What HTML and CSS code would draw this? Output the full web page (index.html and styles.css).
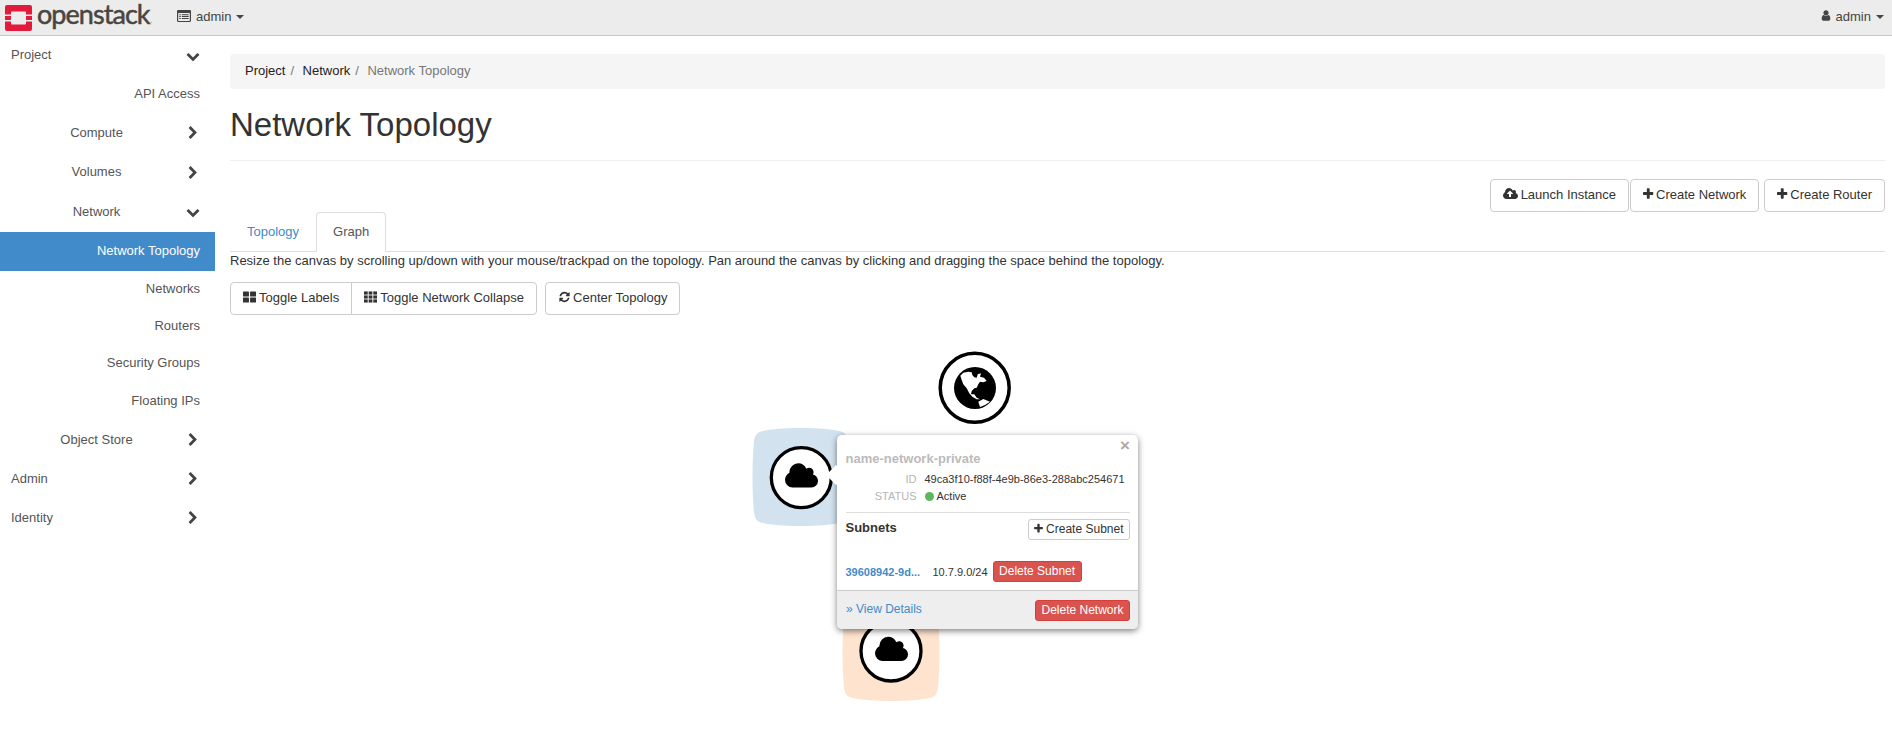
FILE: index.html
```html
<!DOCTYPE html>
<html>
<head>
<title>Network Topology</title>
<meta charset="UTF-8">
<link rel="stylesheet" href="styles.css">
</head>
<body>
<svg class="defs" width="0" height="0">
  <symbol id="i-cloud" viewBox="0 0 1920 1792"><path d="M1920 1152q0 159-112.5 271.5t-271.5 112.5h-1088q-185 0-316.5-131.5t-131.5-316.5q0-130 70-240t188-165q-2-30-2-43 0-212 150-362t362-150q156 0 285.5 87t188.5 231q71-62 166-62 106 0 181 75t75 181q0 76-41 138 130 31 213.5 135.5t83.5 238.5z"/></symbol>
  <symbol id="i-upload" viewBox="0 0 1920 1792"><path d="M1280 864q0-14-9-23l-352-352q-9-9-23-9t-23 9l-351 351q-10 12-10 24 0 14 9 23t23 9h224v352q0 13 9.5 22.5t22.5 9.5h192q13 0 22.5-9.500t9.500-22.500v-352h224q13 0 22.5-9.500t9.500-22.500zm640 288q0 159-112.5 271.5t-271.5 112.5h-1088q-185 0-316.5-131.5t-131.5-316.5q0-130 70-240t188-165q-2-30-2-43 0-212 150-362t362-150q156 0 285.5 87t188.5 231q71-62 166-62 106 0 181 75t75 181q0 76-41 138 130 31 213.5 135.5t83.5 238.5z"/></symbol>
  <symbol id="i-plus" viewBox="192 0 1408 1792"><path d="M1600 736v192q0 40-28 68t-68 28h-416v416q0 40-28 68t-68 28h-192q-40 0-68-28t-28-68v-416h-416q-40 0-68-28t-28-68v-192q0-40 28-68t68-28h416v-416q0-40 28-68t68-28h192q40 0 68 28t28 68v416h416q40 0 68 28t28 68z"/></symbol>
  <symbol id="i-user" viewBox="0 0 1792 1792"><path d="M1536 1399q0 109-62.5 187t-150.5 78h-854q-88 0-150.5-78t-62.5-187q0-85 8.5-160.5t31.5-152 58.5-131 94-89 134.5-34.5q131 128 313 128t313-128q76 0 134.5 34.5t94 89 58.5 131 31.5 152 8.5 160.5zm-256-887q0 159-112.5 271.5t-271.5 112.5-271.5-112.5-112.5-271.5 112.5-271.5 271.5-112.5 271.5 112.5 112.5 271.5z"/></symbol>
  <symbol id="i-down" viewBox="0 0 1792 1792"><path d="M1683 808l-742 741q-19 19-45 19t-45-19l-742-741q-19-19-19-45.5t19-45.5l166-165q19-19 45-19t45 19l531 531 531-531q19-19 45-19t45 19l166 165q19 19 19 45.5t-19 45.5z"/></symbol>
  <symbol id="i-right" viewBox="0 0 1792 1792"><path d="M1363 877l-742 742q-19 19-45 19t-45-19l-166-166q-19-19-19-45t19-45l531-531-531-531q-19-19-19-45t19-45l166-166q19-19 45-19t45 19l742 742q19 19 19 45t-19 45z"/></symbol>
  <symbol id="i-refresh" viewBox="0 0 1792 1792"><path d="M1639 1056q0 5-1 7-64 268-268 434.5t-478 166.5q-146 0-282.5-55t-243.5-157l-129 129q-19 19-45 19t-45-19-19-45v-448q0-26 19-45t45-19h448q26 0 45 19t19 45-19 45l-137 137q71 66 161 102t187 36q134 0 250-65t186-179q11-17 53-117 8-23 30-23h192q13 0 22.5 9.5t9.5 22.5zm25-800v448q0 26-19 45t-45 19h-448q-26 0-45-19t-19-45 19-45l138-138q-148-137-349-137-134 0-250 65t-186 179q-11 17-53 117-8 23-30 23h-199q-13 0-22.5-9.5t-9.5-22.5v-7q65-268 270-434.5t480-166.5q146 0 284 55.5t245 156.5l130-129q19-19 45-19t45 19 19 45z"/></symbol>
  <symbol id="i-large" viewBox="0 0 14 12"><rect x="0" y="0" width="6.4" height="5.4" rx=".6"/><rect x="7.6" y="0" width="6.4" height="5.4" rx=".6"/><rect x="0" y="6.6" width="6.4" height="5.4" rx=".6"/><rect x="7.6" y="6.6" width="6.4" height="5.4" rx=".6"/></symbol>
  <symbol id="i-th" viewBox="0 0 14 12"><rect x="0" y="0" width="4" height="3.4"/><rect x="5" y="0" width="4" height="3.4"/><rect x="10" y="0" width="4" height="3.4"/><rect x="0" y="4.3" width="4" height="3.4"/><rect x="5" y="4.3" width="4" height="3.4"/><rect x="10" y="4.3" width="4" height="3.4"/><rect x="0" y="8.6" width="4" height="3.4"/><rect x="5" y="8.6" width="4" height="3.4"/><rect x="10" y="8.6" width="4" height="3.4"/></symbol>
  <symbol id="i-list" viewBox="0 0 14 12"><path fill-rule="evenodd" d="M1.2 0h11.600c.7 0 1.200.5 1.200 1.200v9.600c0 .7-.5 1.200-1.200 1.200H1.200C.5 12 0 11.500 0 10.800V1.200C0 .5.500 0 1.200 0zM1.200 3v7.600c0 .2.100.3.300.3h11c.2 0 .3-.1.300-.3V3zM2.300 4.200v1h1.500v-1zm2.500 0v1h6.900v-1zM2.300 6.100v1h1.500v-1zm2.500 0v1h6.900v-1zM2.300 8v1h1.500V8zm2.500 0v1h6.900V8z"/></symbol>
  <symbol id="n-back" overflow="visible"><path d="M0-49C16-49 30-48 38-46C44-45 46-42 47-36C49-15 49 15 47 36C46 42 44 45 38 46C30 48 16 49 0 49C-16 49-30 48-38 46C-44 45-46 42-47 36C-49 15-49-15-47-36C-46-42-44-45-38-46C-30-48-16-49 0-49Z"/></symbol>
</svg>

<header class="navbar">
  <div class="brand">
    <svg class="logo" viewBox="0 0 27 26">
      <path fill="#e21a3c" fill-rule="evenodd" d="M2 0h23a2 2 0 0 1 2 2v7.500h-6V7.500a1 1 0 0 0-1-1H7a1 1 0 0 0-1 1v2H0V2a2 2 0 0 1 2-2zM0 16.500h6v2a1 1 0 0 0 1 1h13a1 1 0 0 0 1-1v-2h6V24a2 2 0 0 1-2 2H2a2 2 0 0 1-2-2zM0 11h6v4H0zM21 11h6v4h-6z"/>
    </svg>
    <span class="wordmark">openstack</span><span class="tm">.</span>
  </div>
  <a class="nav-menu"><svg class="ic ic-list"><use href="#i-list"/></svg>admin<i class="caret"></i></a>
  <a class="nav-menu nav-user"><svg class="ic ic-user"><use href="#i-user"/></svg>admin<i class="caret"></i></a>
</header>

<div class="page">
  <nav class="sidebar">
    <a class="side-row top"><span>Project</span><svg class="chev"><use href="#i-down"/></svg></a>
    <a class="side-sub first">API Access</a>
    <a class="side-row mid"><span>Compute</span><svg class="chev"><use href="#i-right"/></svg></a>
    <a class="side-row mid"><span>Volumes</span><svg class="chev"><use href="#i-right"/></svg></a>
    <a class="side-row mid"><span>Network</span><svg class="chev"><use href="#i-down"/></svg></a>
    <a class="side-sub active">Network Topology</a>
    <a class="side-sub">Networks</a>
    <a class="side-sub">Routers</a>
    <a class="side-sub">Security Groups</a>
    <a class="side-sub">Floating IPs</a>
    <a class="side-row mid"><span>Object Store</span><svg class="chev"><use href="#i-right"/></svg></a>
    <a class="side-row top"><span>Admin</span><svg class="chev"><use href="#i-right"/></svg></a>
    <a class="side-row top"><span>Identity</span><svg class="chev"><use href="#i-right"/></svg></a>
  </nav>

  <main class="content">
    <ol class="breadcrumb">
      <li>Project</li><li class="sep">/</li>
      <li>Network</li><li class="sep">/</li>
      <li class="current">Network Topology</li>
    </ol>
    <h1 class="page-title">Network Topology</h1>

    <div class="actions">
      <a class="btn"><svg class="ic ic-cloud"><use href="#i-upload"/></svg>Launch Instance</a>
      <a class="btn"><svg class="ic ic-add"><use href="#i-plus"/></svg>Create Network</a>
      <a class="btn gap"><svg class="ic ic-add"><use href="#i-plus"/></svg>Create Router</a>
    </div>

    <ul class="tabs">
      <li class="tab">Topology</li>
      <li class="tab selected">Graph</li>
    </ul>
    <p class="help">Resize the canvas by scrolling up/down with your mouse/trackpad on the topology. Pan around the canvas by clicking and dragging the space behind the topology.</p>

    <div class="toolbar">
      <div class="btn-group">
        <a class="btn"><svg class="ic ic-grid"><use href="#i-large"/></svg>Toggle Labels</a>
        <a class="btn"><svg class="ic ic-grid"><use href="#i-th"/></svg>Toggle Network Collapse</a>
      </div>
      <a class="btn"><svg class="ic ic-grid ic-sync"><use href="#i-refresh"/></svg>Center Topology</a>
    </div>
  </main>
</div>

<!-- graph canvas, nodes sit where the force layout left them -->
<svg class="graph" width="1892" height="736" viewBox="0 0 1892 736">
  <use href="#n-back" x="801" y="477" fill="#d2e2ef"/>
  <use href="#n-back" x="891" y="652" fill="#fee3ce"/>

  <circle cx="974.700" cy="387.800" r="34.500" fill="#fff" stroke="#000" stroke-width="3.500"/>
  <circle cx="975" cy="388" r="21" fill="#000"/>
  <path fill="#fff" d="M960.300 375.700L963.300 372.700L968.300 371.700L971.700 372.300L972.300 375L974.300 377.300L976.700 377.700L977.700 374.300L981 373.300L980 376.700L984 377.700L986.700 381L983.300 382.300L980 381.700L978.300 384.300L976.700 387.700L974.300 388.300L971.700 391L971 394.300L974.300 394.300L976.700 397.700L980 399.300L976.700 399.300L972.300 396.700L969.300 393.300L966.700 388.300L963.300 384.300L961.700 380Z"/>
  <path fill="#fff" d="M978.300 401.700L983.300 399L990 401.700L985 405L980 407Z"/>

  <circle cx="801.300" cy="477.600" r="30" fill="#fff" stroke="#000" stroke-width="3.300"/>
  <use href="#i-cloud" x="785" y="461" width="33" height="31" fill="#000"/>
  <circle cx="891" cy="651" r="30" fill="#fff" stroke="#000" stroke-width="3.300"/>
  <use href="#i-cloud" x="875" y="634.500" width="33" height="31" fill="#000"/>
</svg>

<section class="balloon">
  <i class="balloon-arrow"></i>
  <span class="close">&times;</span>
  <div class="balloon-body">
    <h4 class="balloon-name">name-network-private</h4>
    <dl class="facts">
      <dt>ID</dt><dd>49ca3f10-f88f-4e9b-86e3-288abc254671</dd>
      <dt>STATUS</dt><dd><i class="dot"></i>Active</dd>
    </dl>
    <div class="subnet-head">
      <strong>Subnets</strong>
      <a class="btn btn-xs"><svg class="ic ic-add"><use href="#i-plus"/></svg>Create Subnet</a>
    </div>
    <div class="subnet-row">
      <a class="subnet-id">39608942-9d...</a>
      <span class="cidr">10.7.9.0/24</span>
      <a class="btn btn-xs danger">Delete Subnet</a>
    </div>
  </div>
  <div class="balloon-foot">
    <a class="details">» View Details</a>
    <a class="btn btn-xs danger">Delete Network</a>
  </div>
</section>
</body>
</html>
```

FILE: styles.css
```css
* {
  box-sizing: border-box;
}

html, body {
  margin: 0;
  height: 736px;
  overflow: hidden;
}

body {
  position: relative;
  background: #fff;
  color: #333;
  font: 13px/18.57px "Liberation Sans", Arial, sans-serif;
}

.defs {
  position: absolute;
}

.ic {
  display: inline-block;
  fill: currentColor;
  vertical-align: -1px;
}

.ic-add {
  width: 10.500px;
  height: 14px;
  margin-right: 2.500px;
  vertical-align: -2px;
}

.ic-grid {
  width: 13px;
  height: 12px;
  margin-right: 3px;
}

.ic-sync {
  margin-right: 2px;
}

.ic-cloud {
  width: 15px;
  height: 14px;
  margin-right: 3px;
  vertical-align: -2px;
}

.ic-list {
  width: 14px;
  height: 12px;
  margin-right: 5px;
}

.ic-user {
  width: 12px;
  height: 13px;
  margin-right: 4px;
}

.caret {
  display: inline-block;
  margin-left: 5px;
  vertical-align: 2px;
  border-top: 4px solid;
  border-left: 4px solid transparent;
  border-right: 4px solid transparent;
}

/* top bar */
.navbar {
  display: flex;
  align-items: center;
  height: 36px;
  padding-right: 8px;
  background: #ececec;
  border-bottom: 1px solid #c8c8c8;
}

.brand {
  display: flex;
  align-items: center;
  width: 177px;
  padding-left: 5px;
}

.logo {
  width: 27px;
  height: 26px;
  margin-right: 5px;
}

.wordmark {
  margin-bottom: 8px;
  color: #4a4540;
  font: 400 27px/30px Lato, sans-serif;
  letter-spacing: -.95px;
  -webkit-text-stroke: .5px #4a4540;
}

.tm {
  color: #999;
  font-size: 10px;
  margin-top: 6px;
}

.nav-menu {
  color: #444;
  white-space: nowrap;
}

.nav-user {
  margin-left: auto;
}

/* side menu */
.page {
  display: flex;
}

.sidebar {
  flex: none;
  width: 215px;
  color: #555;
}

.side-row {
  display: flex;
  align-items: center;
  justify-content: space-between;
  height: 39.300px;
  padding-right: 15px;
}

.side-row span {
  flex: 1;
  text-align: center;
  padding-left: 7px;
}

.side-row.top span {
  text-align: left;
  padding-left: 11px;
}

.chev {
  width: 14px;
  height: 14px;
  fill: #444;
}

.side-sub {
  display: block;
  height: 37.400px;
  line-height: 36.300px;
  padding-right: 15px;
  text-align: right;
}

.side-sub.first {
  height: 38.500px;
  line-height: 37px;
}

.side-sub.active {
  height: 39px;
  line-height: 38px;
  background: #428bca;
  color: #fff;
}

/* main column */
.content {
  flex: 1;
  min-width: 0;
  padding: 18px 7px 0 15px;
}

.breadcrumb {
  display: flex;
  height: 35px;
  margin: 0;
  padding: 8px 15px;
  list-style: none;
  background: #f5f5f5;
  border-radius: 4px;
  color: #222;
}

.breadcrumb .sep {
  margin: 0 8.500px 0 5px;
  color: #777;
}

.breadcrumb .current {
  color: #777;
}

.page-title {
  margin: 0;
  height: 72px;
  padding-top: 18px;
  border-bottom: 1px solid #eee;
  color: #333;
  font-size: 33px;
  font-weight: 400;
  line-height: 36px;
}

.actions {
  display: flex;
  justify-content: flex-end;
  margin-top: 18px;
}

.btn {
  display: inline-block;
  padding: 6px 12px;
  background: #fff;
  border: 1px solid #ccc;
  border-radius: 4px;
  color: #333;
  white-space: nowrap;
}

.actions .btn {
  margin-left: 1px;
}

.actions .btn.gap {
  margin-left: 5px;
}

.tabs {
  display: flex;
  height: 40.500px;
  margin: 0;
  padding: 0;
  list-style: none;
  border-bottom: 1px solid #ddd;
}

.tab {
  padding: 10px 16px;
  margin-bottom: -1px;
  color: #428bca;
  border: 1px solid transparent;
  border-radius: 4px 4px 0 0;
}

.tab.selected {
  color: #555;
  background: #fff;
  border-color: #ddd #ddd #fff;
}

.help {
  margin: 0;
  color: #333;
}

.toolbar {
  display: flex;
  gap: 8px;
  margin-top: 11.500px;
}

.btn-group {
  display: flex;
}

.btn-group .btn:first-child {
  border-radius: 4px 0 0 4px;
}

.btn-group .btn:last-child {
  margin-left: -1px;
  border-radius: 0 4px 4px 0;
}

/* graph and its popup */
.graph {
  position: absolute;
  left: 0;
  top: 0;
  pointer-events: none;
}

.balloon {
  position: absolute;
  left: 837px;
  top: 435px;
  width: 301px;
  height: 194px;
  background: #fff;
  border-radius: 5px;
  box-shadow: 0 2px 6px rgba(0, 0, 0, .5);
  font-size: 11px;
  line-height: 16px;
}

.balloon-arrow {
  position: absolute;
  left: -8px;
  top: 33px;
  width: 14px;
  height: 14px;
  background: #fff;
  transform: rotate(45deg);
}

.close {
  position: absolute;
  right: 8px;
  top: 2px;
  color: #aaa;
  font-size: 17px;
  font-weight: 700;
  line-height: 18px;
}

.balloon-body {
  position: relative;
  padding: 15px 8px 0 8.500px;
}

.balloon-name {
  margin: 0;
  color: #bbb;
  font-size: 13px;
  font-weight: 700;
  line-height: 18px;
}

.facts {
  display: grid;
  grid-template-columns: 71px 1fr;
  column-gap: 8px;
  margin: 3px 0 0;
  padding-bottom: 7px;
  border-bottom: 1px solid #ddd;
  line-height: 17px;
}

.facts dt {
  color: #b5b5b5;
  font-weight: 400;
  text-align: right;
}

.facts dd {
  margin: 0;
  color: #333;
}

.dot {
  display: inline-block;
  width: 9px;
  height: 9px;
  margin-right: 3px;
  background: #5cb85c;
  border-radius: 50%;
  vertical-align: -1px;
}

.subnet-head {
  display: flex;
  align-items: center;
  justify-content: space-between;
  padding-top: 6px;
}

.subnet-head strong {
  font-size: 13px;
  margin-top: -3px;
}

.btn-xs {
  padding: 1px 5.500px;
  border-radius: 3px;
  font-size: 12px;
  line-height: 17px;
}

.btn-xs .ic-add {
  width: 9px;
  height: 11px;
  margin-right: 3px;
  vertical-align: -1px;
}

.subnet-row {
  display: flex;
  align-items: center;
  margin-top: 21px;
}

.subnet-id {
  width: 87px;
  color: #428bca;
  font-weight: 700;
}

.cidr {
  margin-right: 5px;
}

.danger {
  background: #d9534f;
  border-color: #d43f3a;
  color: #fff;
}

.balloon-foot {
  position: absolute;
  left: 0;
  right: 0;
  bottom: 0;
  display: flex;
  align-items: center;
  justify-content: space-between;
  height: 39px;
  padding: 0 8px 0 9px;
  background: #eee;
  border-top: 1px solid #ccc;
  border-radius: 0 0 5px 5px;
}

.details {
  color: #428bca;
  font-size: 12px;
  margin-top: -2px;
}
```
